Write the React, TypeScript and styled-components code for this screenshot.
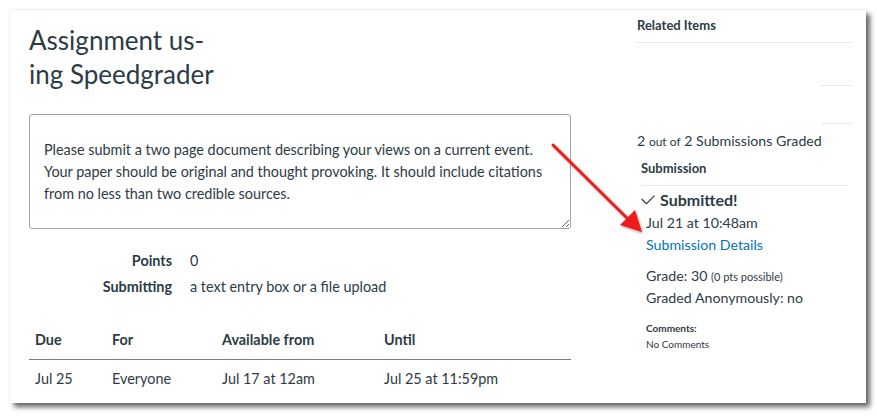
import React from "react";
import styled, { createGlobalStyle } from "styled-components";

const GlobalStyle = createGlobalStyle`
  body {
    margin: 0;
    background: #ffffff;
    font-family: Lato, "Noto Sans", "Liberation Sans", sans-serif;
    color: #2d3b45;
  }
`;

const Page = styled.div`
  padding: 10px;
`;

const Card = styled.div`
  position: relative;
  width: 856px;
  height: 393px;
  display: flex;
  background: #fff;
  box-shadow: 4px 4px 5px rgba(0, 0, 0, 0.6), 0 0 2px rgba(0, 0, 0, 0.12);
  overflow: hidden;
`;

const Main = styled.div`
  width: 542px;
  margin-left: 19px;
  padding-top: 12px;
  font-size: 14.4px;
`;

const Title = styled.h1`
  margin: 0;
  font-size: 26px;
  font-weight: 400;
  line-height: 34px;
  padding-top: 1px;
`;

const Description = styled.div`
  margin-top: 23px;
  box-sizing: border-box;
  height: 115px;
  padding: 24px 14px 20px;
  border: 1px solid #a0a4a8;
  border-radius: 3px;
  line-height: 22px;
  resize: vertical;
  overflow: auto;
`;

const Details = styled.div`
  margin-top: 22px;
  display: flex;
  flex-direction: column;
  gap: 6px;
`;

const DetailRow = styled.div`
  display: flex;
  line-height: 20px;
`;

const DetailLabel = styled.span`
  width: 143px;
  text-align: right;
  font-weight: 700;
`;

const DetailValue = styled.span`
  margin-left: 18px;
`;

const Table = styled.table`
  margin-top: 22px;
  width: 100%;
  border-collapse: collapse;
  line-height: 20px;
`;

const Th = styled.th<{ $w?: number }>`
  text-align: left;
  font-weight: 700;
  padding: 11px 6px 9px;
  border-bottom: 1px solid #6f7b84;
  width: ${(p) => (p.$w ? `${p.$w - 12}px` : "auto")};
`;

const Td = styled.td`
  padding: 9px 6px 15px;
  border-bottom: 1px solid #e3e6e8;
`;

const Sidebar = styled.div`
  width: 216px;
  margin-left: 65px;
  padding-top: 5px;
  display: flex;
  flex-direction: column;
`;

const SideHeading = styled.div`
  font-size: 13px;
  font-weight: 700;
  line-height: 18px;
  padding: 1px 0 8px 1px;
  border-bottom: 1px solid #e6e8ea;
`;

const EmptyItem = styled.div<{ $h: number }>`
  height: ${(p) => p.$h}px;
  align-self: flex-end;
  width: 31px;
  border-bottom: 1px solid #e6e8ea;
`;

const GradedCount = styled.div`
  margin-top: 7px;
  padding-left: 1px;
  font-size: 14.2px;
  line-height: 20px;
`;

const Small = styled.span<{ $size: number }>`
  font-size: ${(p) => p.$size}px;
`;

const SubmissionBox = styled.div`
  margin: 7px 4px 0 5px;
`;

const SubHeading = styled.div`
  font-size: 13px;
  font-weight: 700;
  line-height: 18px;
  padding-bottom: 8px;
  border-bottom: 1px solid #e6e8ea;
`;

const Submitted = styled.div`
  margin-top: 3px;
  display: flex;
  align-items: center;
  gap: 5px;
  font-size: 16px;
  font-weight: 700;
  line-height: 22px;
`;

const Info = styled.div<{ $gap?: number }>`
  margin-top: ${(p) => p.$gap ?? 0}px;
  padding-left: 5px;
  font-size: 14.2px;
  line-height: 21px;
`;

const Link = styled.a`
  color: #0374b5;
  text-decoration: none;
`;

const Comments = styled.div`
  margin-top: 12px;
  padding-left: 5px;
  font-size: 10px;
  line-height: 16px;
`;

const CommentsLabel = styled.div`
  font-weight: 700;
`;

const Arrow = styled.svg`
  position: absolute;
  left: 525px;
  top: 115px;
  overflow: visible;
`;

export default function App() {
  return (
    <>
      <GlobalStyle />
      <Page>
        <Card>
          <Main>
            <Title>
              Assignment us-
              <br />
              ing Speedgrader
            </Title>
            <Description>
              Please submit a two page document describing your views on a current event. Your paper
              should be original and thought provoking. It should include citations from no less than
              two credible sources.
            </Description>
            <Details>
              <DetailRow>
                <DetailLabel>Points</DetailLabel>
                <DetailValue>0</DetailValue>
              </DetailRow>
              <DetailRow>
                <DetailLabel>Submitting</DetailLabel>
                <DetailValue>a text entry box or a file upload</DetailValue>
              </DetailRow>
            </Details>
            <Table>
              <thead>
                <tr>
                  <Th $w={77}>Due</Th>
                  <Th $w={110}>For</Th>
                  <Th $w={162}>Available from</Th>
                  <Th>Until</Th>
                </tr>
              </thead>
              <tbody>
                <tr>
                  <Td>Jul 25</Td>
                  <Td>Everyone</Td>
                  <Td>Jul 17 at 12am</Td>
                  <Td>Jul 25 at 11:59pm</Td>
                </tr>
              </tbody>
            </Table>
          </Main>
          <Sidebar>
            <SideHeading>Related Items</SideHeading>
            <EmptyItem $h={42} />
            <EmptyItem $h={37} />
            <GradedCount>
              2 <Small $size={12}>out of</Small> 2 Submissions Graded
            </GradedCount>
            <SubmissionBox>
              <SubHeading>Submission</SubHeading>
              <Submitted>
                <svg width="14" height="10" viewBox="0 0 14 10" fill="none">
                  <path d="M0.5 4 L5.5 8.6 L13.5 0.6" stroke="#2d3b45" strokeWidth="1.2" />
                </svg>
                Submitted!
              </Submitted>
              <Info $gap={1}>Jul 21 at 10:48am</Info>
              <Info $gap={1}>
                <Link href="#">Submission Details</Link>
              </Info>
              <Info $gap={10}>
                Grade: 30 <Small $size={11}>(0 pts possible)</Small>
              </Info>
              <Info>Graded Anonymously: no</Info>
              <Comments>
                <CommentsLabel>Comments:</CommentsLabel>
                <div>No Comments</div>
              </Comments>
            </SubmissionBox>
          </Sidebar>
          <Arrow width="110" height="110" viewBox="0 0 110 110">
            <defs>
              <filter id="arrowShadow" x="-20%" y="-20%" width="140%" height="140%">
                <feDropShadow dx="1" dy="1.5" stdDeviation="1" floodColor="#000" floodOpacity="0.35" />
              </filter>
            </defs>
            <g filter="url(#arrowShadow)">
              <line x1="18" y1="20" x2="94" y2="95" stroke="#ee1c1c" strokeWidth="3" strokeLinecap="round" />
              <polygon points="107,107 85,100 100,85" fill="#ee1c1c" />
            </g>
          </Arrow>
        </Card>
      </Page>
    </>
  );
}
